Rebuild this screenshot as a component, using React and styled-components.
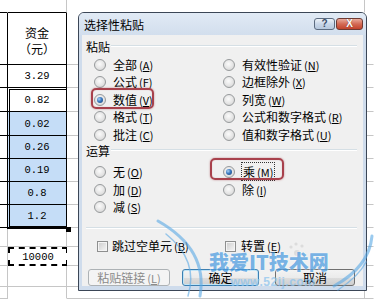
import styled, { createGlobalStyle, css } from "styled-components";

const GlobalStyle = createGlobalStyle`
  html, body {
    margin: 0;
    padding: 0;
    background: #fff;
  }
  body {
    font-family: "Noto Sans CJK SC", "Noto Sans", sans-serif;
    font-size: 12px;
    color: #000;
  }
`;

const BLACK = "#000";
const GRID = "#c6c6c6";
const ROWS = [13, 52, 23, 24, 24, 23, 23, 23, 23, 19, 19, 21, 12];

const Page = styled.div`
  position: relative;
  width: 374px;
  height: 299px;
  overflow: hidden;
  background: #fff;
`;

const Sheet = styled.div`
  display: flex;
  height: 100%;
`;

const Column = styled.div`
  position: relative;
  display: flex;
  flex-direction: column;
  width: ${(p) => (p.$w ? `${p.$w}px` : "auto")};
  flex: ${(p) => (p.$w ? "none" : "1")};
`;

const Cell = styled.div`
  box-sizing: border-box;
  height: ${(p) => p.$h}px;
  flex: none;
  display: flex;
  flex-direction: column;
  align-items: center;
  justify-content: center;
  border-bottom: 1px solid ${(p) => p.$bb || "transparent"};
  border-right: 1px solid ${(p) => p.$br || "transparent"};
  background: ${(p) => p.$bg || "#fff"};
  font-family: "Liberation Mono", "DejaVu Sans Mono", monospace;
  font-size: 10.5px;
  line-height: 12px;
`;

const HeaderCell = styled(Cell)`
  justify-content: flex-start;
`;

const HeaderText = styled.div`
  font-family: "Noto Sans CJK SC", sans-serif;
  font-size: 12px;
  line-height: 16px;
  padding-top: 12px;
  text-align: center;
`;

const RangeGroup = styled.div`
  position: relative;
  display: flex;
  flex-direction: column;

  &::after {
    content: "";
    position: absolute;
    top: -1px;
    left: -1px;
    right: -2px;
    bottom: -1px;
    border: 3px double #000;
    pointer-events: none;
  }
`;

const FillHandle = styled.span`
  position: absolute;
  right: -4px;
  bottom: -4px;
  width: 5px;
  height: 5px;
  background: #000;
  z-index: 1;
`;

const CopyCell = styled(Cell)`
  border: 2px dashed #000;
  width: 60px;
`;

/* dialog */

const Dialog = styled.div`
  position: absolute;
  left: 78px;
  top: 12px;
  width: 289px;
  height: 279px;
  box-sizing: border-box;
  border: 1px solid #3b4656;
  border-radius: 6px 6px 0 0;
  background: #cfdcec;
  display: flex;
  flex-direction: column;
  padding: 0 3px 4px 3px;
  z-index: 2;
`;

const TitleBar = styled.div`
  height: 22px;
  flex: none;
  display: flex;
  align-items: center;
  margin: 0 -3px;
  padding: 0 3px 0 5px;
  background: linear-gradient(#e1eaf5, #d2deed);
  border-radius: 5px 5px 0 0;
`;

const Title = styled.div`
  flex: 1;
  font-size: 12px;
  line-height: 14px;
  padding-top: 2px;
`;

const CaptionButton = styled.div`
  box-sizing: border-box;
  height: 12px;
  width: ${(p) => p.$w}px;
  border: 1px solid #5c6b80;
  border-radius: 3px;
  display: flex;
  align-items: center;
  justify-content: center;
  font-family: "Liberation Sans", sans-serif;
  font-weight: bold;
  font-size: 10px;
  line-height: 10px;
  ${(p) =>
    p.$close
      ? css`
          background: linear-gradient(#e9ab9c, #d36a55 50%, #c2432c);
          color: #fff;
          border-color: #6d3a33;
          text-shadow: 0 0 1px #5a1a10;
        `
      : css`
          background: linear-gradient(#eef3f9, #c8d6e8 50%, #b6c8de);
          color: #3b4e69;
          margin-right: 1px;
        `}
`;

const Body = styled.div`
  flex: 1;
  background: #f0f0f0;
  padding: 5px 6px 0 4px;
  display: flex;
  flex-direction: column;
`;

const GroupLabel = styled.div`
  display: flex;
  align-items: center;
  gap: 1px;
  height: 14px;
  font-size: 12px;
  line-height: 14px;

  &::after {
    content: "";
    flex: 1;
    height: 1px;
    margin-top: -2px;
    background: #d5dfe5;
    border-bottom: 1px solid #fff;
  }
`;

const RadioGrid = styled.div`
  display: grid;
  grid-template-columns: 129px 1fr;
  grid-auto-rows: 17.5px;
  padding-left: 8px;
  margin-top: ${(p) => p.$mt}px;
`;

const Item = styled.label`
  position: relative;
  display: flex;
  align-items: center;
  gap: ${(p) => p.$gap || 7}px;
  font-size: 12px;
  line-height: 14px;
  white-space: nowrap;
`;

const RadioDot = styled.span`
  position: relative;
  flex: none;
  box-sizing: border-box;
  width: 12px;
  height: 12px;
  border-radius: 50%;
  border: 1px solid #979a9c;
  background: radial-gradient(circle at 45% 40%, #fbfbfb 0, #e4e4e4 55%, #cdcdcd 100%);

  ${(p) =>
    p.$on &&
    css`
      &::after {
        content: "";
        position: absolute;
        left: 2px;
        top: 2px;
        width: 6px;
        height: 6px;
        border-radius: 50%;
        background: radial-gradient(circle at 35% 35%, #a9d2f5 0, #3a78c0 45%, #173e70 100%);
      }
    `}
`;

const Key = styled.span`
  margin-left: 2px;
  font-size: 11px;
  & u {
    text-underline-offset: 1px;
  }
`;

const Focus = styled.span`
  outline: 1px dotted #333;
  outline-offset: 0;
  padding: 0 1px;
`;

const Highlight = styled.span`
  position: absolute;
  left: ${(p) => p.$l}px;
  top: ${(p) => p.$t}px;
  width: ${(p) => p.$w}px;
  height: ${(p) => p.$h}px;
  box-sizing: border-box;
  border: 2px solid #a8414c;
  border-radius: 5px;
  box-shadow: 0 0 2px rgba(150, 40, 50, 0.55), inset 0 0 1px rgba(150, 40, 50, 0.4);
  pointer-events: none;
`;

const Separator = styled.div`
  height: 1px;
  background: #d5dfe5;
  border-bottom: 1px solid #fff;
  margin-top: 11px;
`;

const CheckRow = styled.div`
  display: grid;
  grid-template-columns: 128px 1fr;
  padding-left: 11px;
  margin-top: 10px;
  height: 14px;
`;

const CheckBox = styled.span`
  flex: none;
  box-sizing: border-box;
  width: 11px;
  height: 11px;
  border: 1px solid #8e8f8f;
  background: linear-gradient(135deg, #cbcbcb, #f7f7f7);
  box-shadow: inset 0 0 0 1px #f4f4f4;
`;

const ButtonRow = styled.div`
  display: flex;
  margin-top: 16px;
  padding-left: 2px;
`;

const Button = styled.div`
  box-sizing: border-box;
  width: ${(p) => p.$w}px;
  height: 17px;
  margin-left: ${(p) => p.$ml || 0}px;
  border: 1px solid #707070;
  border-radius: 3px;
  display: flex;
  align-items: center;
  justify-content: center;
  font-size: 12px;
  line-height: 14px;
  background: linear-gradient(#f3f3f3 0%, #ebebeb 50%, #dddddd 51%, #cfcfcf 100%);

  ${(p) =>
    p.$default &&
    css`
      border-color: #3c7fb1;
      box-shadow: inset 0 0 0 1px #bfe4f7;
    `}
  ${(p) =>
    p.$disabled &&
    css`
      border-color: #adb2b5;
      background: #f4f4f4;
      color: #8a8a8a;
    `}
`;

/* watermark */

const Watermark = styled.div`
  position: absolute;
  inset: 0;
  z-index: 3;
  pointer-events: none;
`;

const MarkText = styled.div`
  position: absolute;
  left: 209px;
  top: 251px;
  display: flex;
  flex-direction: column;
  align-items: center;
  opacity: 0.72;
`;

const MarkTitle = styled.div`
  font-family: "Noto Sans CJK SC", sans-serif;
  font-weight: 900;
  font-size: 20px;
  line-height: 22px;
  color: #4a9be0;
  text-shadow: 0 0 1px #fff, 0 0 2px #fff;
`;

const MarkUrl = styled.div`
  font-family: "Liberation Sans", sans-serif;
  font-weight: bold;
  font-size: 12px;
  line-height: 12px;
  margin-top: 3px;
  margin-left: 8px;
  letter-spacing: 0.5px;
  color: #8cc3ee;
`;

const Swooshes = styled.svg`
  position: absolute;
  inset: 0;
`;

const k = (label, key) => (
  <>
    {label}
    <Key>
      (<u>{key}</u>)
    </Key>
  </>
);

const Radio = ({ on, children, highlight }) => (
  <Item>
    <RadioDot $on={on} />
    <span>{children}</span>
    {highlight}
  </Item>
);

function SheetArea() {
  const colA = ROWS.map((h, i) => ({
    h,
    bb: i <= 8 ? BLACK : GRID,
    br: i === 0 ? "transparent" : i <= 8 ? BLACK : GRID,
  }));
  const range = ["0.82", "0.02", "0.26", "0.19", "0.8", "1.2"];

  return (
    <Sheet>
      <Column $w={8}>
        {colA.map((c, i) => (
          <Cell key={i} $h={c.h} $bb={c.bb} $br={c.br} />
        ))}
      </Column>
      <Column $w={59}>
        <Cell $h={13} $bb={BLACK} $br={GRID} />
        <HeaderCell $h={52} $bb={BLACK} $br={BLACK}>
          <HeaderText>
            资金
            <br />
            （元）
          </HeaderText>
        </HeaderCell>
        <Cell $h={23} $bb={BLACK} $br={BLACK}>
          3.29
        </Cell>
        <RangeGroup>
          {range.map((v, i) => (
            <Cell
              key={v}
              $h={ROWS[3 + i]}
              $bb={BLACK}
              $br={BLACK}
              $bg={i === 0 ? "#fff" : "#c5ddf7"}
            >
              {v}
            </Cell>
          ))}
          <FillHandle />
        </RangeGroup>
        <Cell $h={19} $bb={GRID} $br={GRID} />
        <CopyCell $h={19}>10000</CopyCell>
        <Cell $h={21} $bb={GRID} $br={GRID} />
        <Cell $h={12} $br={GRID} />
      </Column>
      <Column $w={298}>
        {ROWS.map((h, i) => (
          <Cell key={i} $h={h} $bb={i === 0 ? "transparent" : GRID} $br={GRID} />
        ))}
      </Column>
      <Column>
        {ROWS.map((h, i) => (
          <Cell key={i} $h={h} $bb={i === 0 ? "transparent" : GRID} />
        ))}
      </Column>
    </Sheet>
  );
}

function PasteSpecial() {
  return (
    <Dialog>
      <TitleBar>
        <Title>选择性粘贴</Title>
        <CaptionButton $w={21}>?</CaptionButton>
        <CaptionButton $w={27} $close>
          X
        </CaptionButton>
      </TitleBar>
      <Body>
        <GroupLabel>粘贴</GroupLabel>
        <RadioGrid $mt={2}>
          <Radio>{k("全部", "A")}</Radio>
          <Radio>{k("有效性验证", "N")}</Radio>
          <Radio>{k("公式", "F")}</Radio>
          <Radio>{k("边框除外", "X")}</Radio>
          <Radio on highlight={<Highlight $l={-3} $t={-3} $w={63} $h={21} />}>
            {k("数值", "V")}
          </Radio>
          <Radio>{k("列宽", "W")}</Radio>
          <Radio>{k("格式", "T")}</Radio>
          <Radio>{k("公式和数字格式", "R")}</Radio>
          <Radio>{k("批注", "C")}</Radio>
          <Radio>{k("值和数字格式", "U")}</Radio>
        </RadioGrid>
        <GroupLabel>运算</GroupLabel>
        <RadioGrid $mt={6}>
          <Radio>{k("无", "O")}</Radio>
          <Radio on highlight={<Highlight $l={-13} $t={-6} $w={74} $h={22} />}>
            <Focus>{k("乘", "M")}</Focus>
          </Radio>
          <Radio>{k("加", "D")}</Radio>
          <Radio>{k("除", "I")}</Radio>
          <Radio>{k("减", "S")}</Radio>
        </RadioGrid>
        <Separator />
        <CheckRow>
          <Item $gap={4}>
            <CheckBox />
            <span>{k("跳过空单元", "B")}</span>
          </Item>
          <Item $gap={5}>
            <CheckBox />
            <span>{k("转置", "E")}</span>
          </Item>
        </CheckRow>
        <ButtonRow>
          <Button $w={82} $disabled>
            {k("粘贴链接", "L")}
          </Button>
          <Button $w={77} $ml={12} $default>
            确定
          </Button>
          <Button $w={80} $ml={16}>
            取消
          </Button>
        </ButtonRow>
      </Body>
    </Dialog>
  );
}

function SiteMark() {
  return (
    <Watermark>
      <Swooshes width="374" height="299" viewBox="0 0 374 299">
        <g fill="none" stroke="#5aa9e6" strokeLinecap="round" opacity="0.6">
          <path d="M158 221 C 188 238, 206 262, 200 296" strokeWidth="3" />
          <path d="M166 234 C 186 250, 196 270, 188 296" strokeWidth="1.5" />
          <path d="M372 236 C 370 258, 356 274, 334 286" strokeWidth="3" />
          <path d="M366 262 C 360 274, 350 282, 338 290" strokeWidth="1.5" />
        </g>
        <g fill="#d8d8d8" opacity="0.8">
          <circle cx="297" cy="253" r="3" />
          <circle cx="291" cy="247" r="1.6" />
          <circle cx="296" cy="244" r="1.6" />
          <circle cx="302" cy="246" r="1.6" />
        </g>
      </Swooshes>
      <MarkText>
        <MarkTitle>我爱IT技术网</MarkTitle>
        <MarkUrl>www.52ij.com</MarkUrl>
      </MarkText>
    </Watermark>
  );
}

export default function App() {
  return (
    <>
      <GlobalStyle />
      <Page>
        <SheetArea />
        <PasteSpecial />
        <SiteMark />
      </Page>
    </>
  );
}
